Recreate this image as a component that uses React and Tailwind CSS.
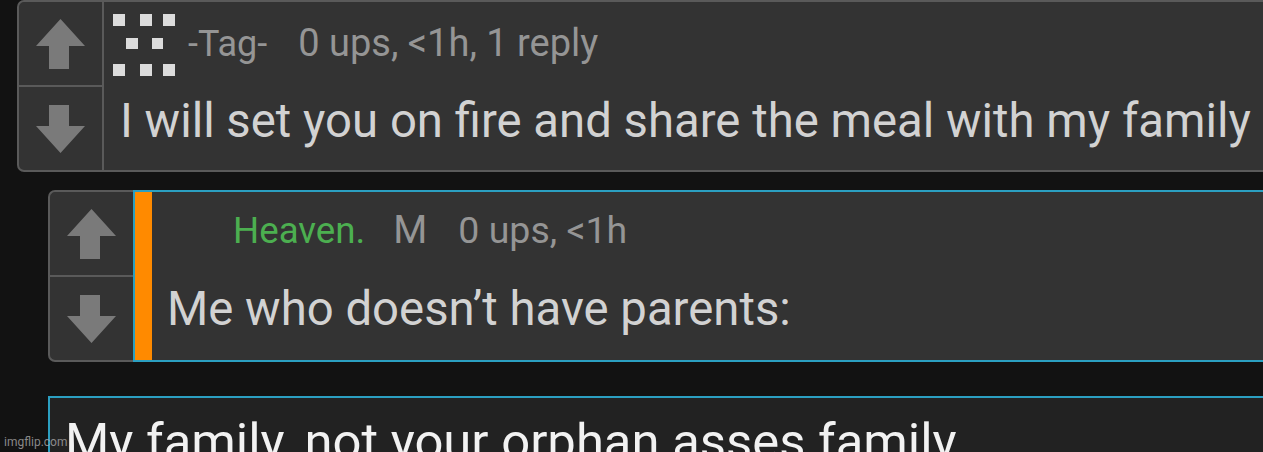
import React from "react";

function UpArrow() {
  return (
    <svg width="49" height="50" viewBox="0 0 49 50">
      <polygon points="24.5,0 49,27 33,27 33,50 13,50 13,27 0,27" fill="#7a7a7a" />
    </svg>
  );
}

function DownArrow() {
  return (
    <svg width="49" height="48" viewBox="0 0 49 48">
      <polygon points="13,0 33,0 33,21 49,21 24.5,48 0,21 13,21" fill="#7a7a7a" />
    </svg>
  );
}

function PixelIcon() {
  return (
    <svg width="63" height="62" viewBox="0 0 63 62">
      <g fill="#dcdcdc">
        <rect x="0" y="0" width="12" height="12" />
        <rect x="27" y="0" width="12" height="12" />
        <rect x="50" y="0" width="12" height="12" />
        <rect x="13" y="24" width="12" height="11" />
        <rect x="39" y="24" width="11" height="11" />
        <rect x="0" y="50" width="12" height="12" />
        <rect x="27" y="50" width="12" height="12" />
        <rect x="50" y="50" width="12" height="12" />
      </g>
    </svg>
  );
}

function VoteColumn() {
  return (
    <div className="flex flex-col w-[83px] shrink-0">
      <div className="h-[85px] flex items-center justify-center border-b-2 border-[#5a5a5a]">
        <UpArrow />
      </div>
      <div className="h-[83px] flex items-center justify-center">
        <DownArrow />
      </div>
    </div>
  );
}

export default function App() {
  return (
    <div className="relative w-[1263px] h-[452px] overflow-hidden bg-[#121212] font-[Roboto,sans-serif]">
      {/* Comment 1 */}
      <div className="ml-[17px] w-[1300px] flex border-2 border-[#5a5a5a] rounded-l-[7px] bg-[#333333]">
        <div className="border-r-2 border-[#5a5a5a]">
          <VoteColumn />
        </div>
        <div className="flex-1 pl-[9px] pt-[12px]">
          <div className="flex items-start h-[62px]">
            <PixelIcon />
            <div className="mt-[10px] ml-[12px] flex items-baseline leading-none text-[#959595] whitespace-nowrap">
              <span className="text-[36px]">-Tag-</span>
              <span className="ml-[31px] text-[38px]">0 ups, &lt;1h, 1 reply</span>
            </div>
          </div>
          <div className="mt-[22px] ml-[7px] text-[47.3px] leading-none text-[#d2d2d2] whitespace-nowrap">
            I will set you on fire and share the meal with my family
          </div>
        </div>
      </div>

      {/* Comment 2 (reply) */}
      <div className="mt-[18px] ml-[48px] w-[1300px] flex">
        <div className="border-2 border-r-0 border-[#5a5a5a] rounded-l-[7px] bg-[#333333]">
          <VoteColumn />
        </div>
        <div className="flex-1 flex border-2 border-[#2b9fc1] bg-[#333333]">
          <div className="w-[17px] shrink-0 bg-[#ff8a00]" />
          <div className="flex-1 pt-[19px]">
            <div className="flex items-baseline whitespace-nowrap leading-none pl-[81px] text-[#959595]">
              <span className="text-[36.7px] text-[#4caf50]">Heaven.</span>
              <span className="ml-[28px] text-[39px]">M</span>
              <span className="ml-[31px] text-[37.5px]">0 ups, &lt;1h</span>
            </div>
            <div className="mt-[36px] ml-[15px] text-[47.3px] leading-none text-[#d2d2d2] whitespace-nowrap">
              Me who doesn’t have parents:
            </div>
          </div>
        </div>
      </div>

      {/* Comment 3 (typing box) */}
      <div className="mt-[34px] ml-[48px] w-[1300px] h-[120px] border-2 border-[#2b9fc1] bg-[#222222] pt-[19px] pl-[15px]">
        <div className="text-[50.8px] leading-none text-[#f2f2f2] whitespace-nowrap">
          My family, not your orphan asses family
        </div>
      </div>

      <div className="absolute left-[4px] top-[436px] text-[12px] leading-none text-[#a8a8a8]/80">
        imgflip.com
      </div>
    </div>
  );
}
